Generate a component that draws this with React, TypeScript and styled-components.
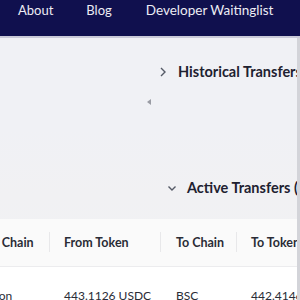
import React from "react";
import styled, { createGlobalStyle } from "styled-components";

const Global = createGlobalStyle`
  html, body { margin: 0; padding: 0; background: #f0f1f5; overflow: hidden; }
  body { font-family: "Lato", "Open Sans", "Liberation Sans", sans-serif; }
`;

const Page = styled.div`
  width: 300px;
  height: 300px;
  overflow: hidden;
  display: flex;
  flex-direction: column;
  background: #f0f1f5;
`;

const NavBar = styled.nav`
  height: 36px;
  flex: none;
  background: #10104e;
  display: flex;
  align-items: flex-start;
  padding: 2px 0 0 18px;
  box-sizing: border-box;
`;

const NavLink = styled.a<{ $gap: number }>`
  color: #ececf4;
  font-size: 13px;
  line-height: 17px;
  margin-right: ${(p) => p.$gap}px;
  text-decoration: none;
  white-space: nowrap;
`;

const NavWide = styled(NavLink)`
  font-size: 13.5px;
`;

const NavEdge = styled.div`
  height: 2px;
  flex: none;
  background: #c9c9d8;
`;

const Main = styled.main`
  flex: 1;
  display: flex;
  flex-direction: column;
  border-right: 3px solid #d3d4d9;
  overflow: hidden;
  background: linear-gradient(180deg, #f0f1f5 0%, #f0f1f5 35%, #f1f1f3 60%, #f0f1f5 100%);
`;

const SectionTitle = styled.div<{ $indent: number; $top: number }>`
  display: flex;
  align-items: center;
  gap: 10px;
  padding-left: ${(p) => p.$indent}px;
  margin-top: ${(p) => p.$top}px;
  height: 20px;
  white-space: nowrap;
`;

const Chevron = styled.svg`
  width: 10px;
  height: 10px;
  flex: none;
  stroke: #555a66;
  stroke-width: 1.4;
  fill: none;
`;

const TitleText = styled.span`
  font-size: 14.5px;
  font-weight: 700;
  color: #1e2130;
`;

const Caret = styled.div`
  width: 0;
  height: 0;
  margin: 19px 0 0 147px;
  border-top: 3px solid transparent;
  border-bottom: 3px solid transparent;
  border-right: 4px solid #9a9ca4;
`;

const Table = styled.table`
  margin: 23px 0 0 -45px;
  border-collapse: collapse;
  table-layout: fixed;
  width: 420px;
  white-space: nowrap;
`;

const Th = styled.th<{ $w: number; $sep?: boolean; $pad: number }>`
  width: ${(p) => p.$w}px;
  height: 47px;
  padding: 0 0 0 ${(p) => p.$pad}px;
  box-sizing: border-box;
  text-align: left;
  font-size: 12.5px;
  font-weight: 700;
  color: #2a2c36;
  background: #fafafa;
  border-bottom: 1px solid #ececee;
  position: relative;
  &::after {
    content: "";
    display: ${(p) => (p.$sep ? "block" : "none")};
    position: absolute;
    right: 0;
    top: 50%;
    transform: translateY(-50%);
    width: 1px;
    height: 20px;
    background: #e8e8ea;
  }
`;

const Td = styled.td<{ $pad: number }>`
  padding: 21px 0 0 ${(p) => p.$pad}px;
  font-size: 12px;
  color: #2a2c36;
  background: #ffffff;
  height: 40px;
  vertical-align: top;
`;

const columns = [
  { label: "From Chain", w: 95, pad: 15, value: "Polygon" },
  { label: "From Token", w: 111, pad: 14, value: "443.1126 USDC" },
  { label: "To Chain", w: 76, pad: 15, value: "BSC" },
  { label: "To Token", w: 138, pad: 14, value: "442.4146 BUSD" },
];

export default function App() {
  return (
    <Page>
      <Global />
      <NavBar>
        <NavLink $gap={33}>About</NavLink>
        <NavLink $gap={34}>Blog</NavLink>
        <NavWide $gap={0}>Developer Waitinglist</NavWide>
      </NavBar>
      <NavEdge />
      <Main>
        <SectionTitle $indent={158} $top={25}>
          <Chevron viewBox="0 0 10 10">
            <path d="M3 1 L7 5 L3 9" />
          </Chevron>
          <TitleText>Historical Transfers</TitleText>
        </SectionTitle>
        <Caret />
        <SectionTitle $indent={167} $top={74}>
          <Chevron viewBox="0 0 10 10">
            <path d="M1.5 3.5 L5 7 L8.5 3.5" />
          </Chevron>
          <TitleText>Active Transfers (1)</TitleText>
        </SectionTitle>
        <Table>
          <thead>
            <tr>
              {columns.map((c, i) => (
                <Th key={c.label} $w={c.w} $pad={c.pad} $sep={i < columns.length - 1}>
                  {c.label}
                </Th>
              ))}
            </tr>
          </thead>
          <tbody>
            <tr>
              {columns.map((c) => (
                <Td key={c.label} $pad={c.pad}>
                  {c.value}
                </Td>
              ))}
            </tr>
          </tbody>
        </Table>
      </Main>
    </Page>
  );
}
